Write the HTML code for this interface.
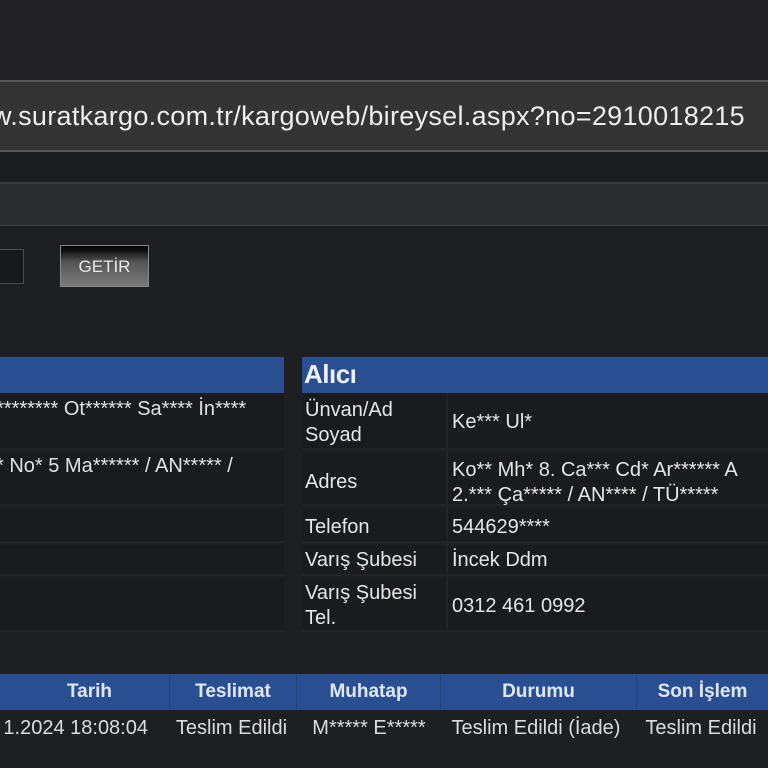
<!DOCTYPE html>
<html><head><meta charset="utf-8"><style>
body{margin:0;width:768px;height:768px;overflow:hidden;background:#1e1f21;font-family:"Liberation Sans","DejaVu Sans",sans-serif;color:#e2e2e2;position:relative}
div{position:absolute;box-sizing:border-box}
.t{white-space:nowrap}
.blue{background:#2a4e92}
.lab{font-size:20px;color:#e6e6e6;left:305px}
.val{font-size:20px;color:#e6e6e6;left:452px}
.row{background:#1a1b1d;border-bottom:2px solid #232427}
.th{top:674px;height:36px;font-size:19px;font-weight:bold;color:#dfe8fb;text-align:center;line-height:36px;border-right:1px solid #24467f}
.td{top:717px;font-size:20px;color:#dcdcdc;text-align:center}
</style></head><body>
<div style="left:0;top:0;width:768px;height:80px;background:#222224"></div>
<div style="left:0;top:80px;width:768px;height:72px;background:#343434;border-top:2px solid #5a5a5a;border-bottom:2px solid #5a5a5a"></div>
<div class="t" style="left:-8px;top:101px;font-size:27px;letter-spacing:0.3px;color:#ededed">w.suratkargo.com.tr/kargoweb/bireysel.aspx?no=2910018215</div>
<div style="left:0;top:152px;width:768px;height:32px;background:#1b1c1d;border-bottom:2px solid #3a3c3f"></div>
<div style="left:0;top:184px;width:768px;height:42px;background:#2a2d30;border-bottom:1px solid #3a3c3f"></div>
<div style="left:-4px;top:249px;width:28px;height:35px;background:#18191a;border:1px solid #4a4a4a"></div>
<div style="left:60px;top:245px;width:89px;height:42px;border:1px solid #888;background:linear-gradient(#000 0,#111 12%,#555 40%,#7a7a7a 100%);color:#e8e8e8;font-size:17px;text-align:center;line-height:42px">GETİR</div>
<div class="blue" style="left:0;top:357px;width:284px;height:36px"></div>
<div class="blue" style="left:302px;top:357px;width:466px;height:36px"></div>
<div class="t" style="left:304px;top:359px;font-size:26px;font-weight:bold;letter-spacing:-0.5px;color:#eef2fb">Alıcı</div>
<div class="row" style="left:0;top:393px;width:284px;height:57px"></div>
<div class="row" style="left:0;top:452px;width:284px;height:54px"></div>
<div class="row" style="left:0;top:508px;width:284px;height:35px"></div>
<div class="row" style="left:0;top:545px;width:284px;height:31px"></div>
<div class="row" style="left:0;top:578px;width:284px;height:54px"></div>
<div class="t" style="left:-4px;top:398px;font-size:20px">******** Ot****** Sa**** İn****</div>
<div class="t" style="left:-4px;top:455px;font-size:20px">* No* 5 Ma****** / AN***** /</div>
<div class="row" style="left:302px;top:393px;width:466px;height:57px"></div>
<div class="row" style="left:302px;top:452px;width:466px;height:54px"></div>
<div class="row" style="left:302px;top:508px;width:466px;height:35px"></div>
<div class="row" style="left:302px;top:545px;width:466px;height:31px"></div>
<div class="row" style="left:302px;top:578px;width:466px;height:54px"></div>
<div style="left:446px;top:393px;width:2px;height:240px;background:#232427"></div>
<div class="lab" style="top:398px;line-height:25px">Ünvan/Ad<br>Soyad</div>
<div class="val t" style="top:411px">Ke*** Ul*</div>
<div class="lab t" style="top:471px">Adres</div>
<div class="val t" style="top:458px;line-height:25px">Ko** Mh* 8. Ca*** Cd* Ar****** A<br>2.*** Ça***** / AN**** / TÜ*****</div>
<div class="lab t" style="top:516px">Telefon</div>
<div class="val t" style="top:516px">544629****</div>
<div class="lab t" style="top:549px">Varış Şubesi</div>
<div class="val t" style="top:549px">İncek Ddm</div>
<div class="lab" style="top:581px;line-height:25px">Varış Şubesi<br>Tel.</div>
<div class="val t" style="top:595px">0312 461 0992</div>
<div class="blue" style="left:0;top:674px;width:768px;height:36px"></div>
<div class="th" style="left:0;width:170px;padding-left:10px">Tarih</div>
<div class="th" style="left:170px;width:127px">Teslimat</div>
<div class="th" style="left:297px;width:144px">Muhatap</div>
<div class="th" style="left:441px;width:196px">Durumu</div>
<div class="th" style="left:637px;width:131px;border:0">Son İşlem</div>
<div class="td t" style="left:0;width:148px;text-align:right">1.2024 18:08:04</div>
<div class="td t" style="left:168px;width:127px">Teslim Edildi</div>
<div class="td t" style="left:297px;width:144px">M***** E*****</div>
<div class="td t" style="left:438px;width:196px">Teslim Edildi (İade)</div>
<div class="td t" style="left:634px;width:134px">Teslim Edildi</div>
</body></html>
